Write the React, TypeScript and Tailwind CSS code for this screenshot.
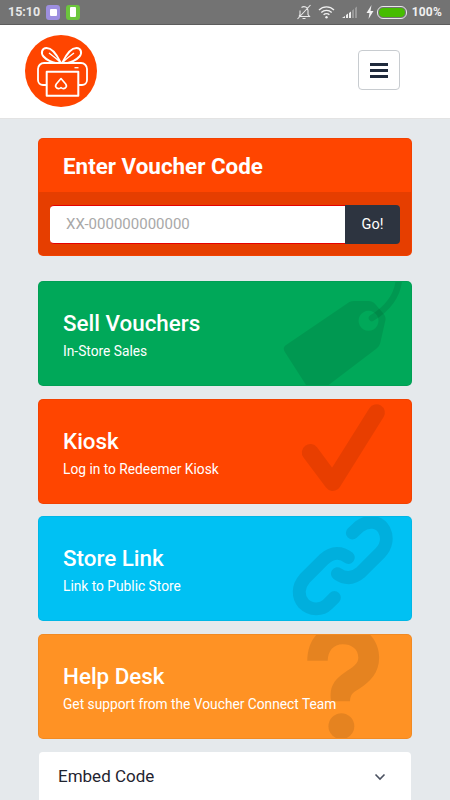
import React from "react";

function StatusIcons() {
  return (
    <div className="flex items-center">
      <svg width="16" height="16" viewBox="0 0 16 16" fill="none" stroke="#e8e8e8" strokeWidth="1.1" className="mr-[6px]">
        <path d="M3 12.5h10.5l-1.5-2V6.5a4 4 0 0 0-6.5-3M4 6.5v4l-1 2M6.5 14.5h3M1.500 15 14.500 1" />
      </svg>
      <svg width="17" height="14" viewBox="0 0 17 14" fill="none" stroke="#f0f0f0" strokeWidth="1.3" className="mr-[7px]">
        <path d="M1 5a10.500 10.500 0 0 1 15 0M3.300 7.500a7.200 7.200 0 0 1 10.400 0M5.600 9.800a4 4 0 0 1 5.800 0" />
        <circle cx="8.500" cy="12.300" r="1.200" fill="#f0f0f0" stroke="none" />
      </svg>
      <svg width="16" height="12" viewBox="0 0 16 12" className="mr-[8px]">
        <path d="M0 12l3-2v2zM4 12V9l2-1.500V12zM7 12V7l2-1.500V12z" fill="#eeeeee" />
        <path d="M10 12V4.500l2-1.500V12zM13 12V2l2-1.500V12z" fill="#9a9a9a" />
      </svg>
      <svg width="8" height="14" viewBox="0 0 8 14" className="mr-[3px]">
        <path d="M5.500 0 0.500 8h3L2.500 14l5-8h-3z" fill="#f0f0f0" />
      </svg>
      <div className="mr-[5px] flex h-[13px] w-[30px] items-center rounded-[6px] border border-[#e8e8e8] p-[1px]">
        <div className="h-full w-full rounded-[5px] bg-[#46bc00]" />
      </div>
      <span className="text-[12px] font-bold tracking-[0.2px] text-[#f0f0f0]">100%</span>
    </div>
  );
}

function Logo() {
  return (
    <svg width="72" height="72" viewBox="0 0 72 72" fill="none" stroke="white" strokeWidth="1.800" strokeLinejoin="round">
      <circle cx="36" cy="36" r="36" fill="#ff4500" stroke="none" />
      <path d="M21.700 50H18a5 5 0 0 1-5-5V34a6 6 0 0 1 6-6h37a6 6 0 0 1 6 6v11a5 5 0 0 1-5 5h-3" />
      <rect x="21.700" y="36.700" width="31.600" height="24" strokeWidth="2" />
      <path d="M35.500 27.500C32 20 27 13 21.500 13c-4.500 0-6 5-3 8.500 3 3.500 9 6 12 6.500" strokeWidth="2" />
      <path d="M35.500 27.500C32.500 24.500 26 19.500 24 18" strokeWidth="1.400" />
      <path d="M37.500 27.500C41 20 46 13 51.500 13c4.500 0 6 5 3 8.500-3 3.500-9 6-12 6.500" strokeWidth="2" />
      <path d="M37.500 27.500C40.500 24.500 47 19.500 49 18" strokeWidth="1.400" />
      <path d="M49.500 32.700h4" strokeWidth="1.300" />
      <path d="M36 43.500 31.300 49c-2.300 3.500 2 6 4.700 3.500 2.700 2.500 7 0 4.700-3.500z" strokeWidth="1.600" />
    </svg>
  );
}

function Tag() {
  return (
    <svg className="absolute inset-0 h-full w-full" viewBox="0 0 374 105" preserveAspectRatio="xMinYMin slice">
      <g opacity="0.09" fill="black">
        <path
          fillRule="evenodd"
          d="M312 20c1.500-.7 3-1 4.500-1h15c2.500 0 4.500 1 6 2.500l9 10.500c1.500 2 2.300 4 1.800 6.500l-5 22c-.6 2.500-2 5-4.500 6.800L288 106h-18L247 70c-1.500-2.500-1.300-4.500 1-6.500zM331.300 29a10 10 0 1 0 .01 0z"
        />
      </g>
      <path d="M334.700 36.300C350 27 361 14 362 -4" fill="none" stroke="black" strokeOpacity="0.09" strokeWidth="6.500" strokeLinecap="round" />
    </svg>
  );
}

function Check() {
  return (
    <svg className="absolute inset-0 h-full w-full" viewBox="0 0 374 105" preserveAspectRatio="xMinYMin slice">
      <path d="M272.700 52.700 295.300 83 339.300 12.700" fill="none" stroke="black" strokeOpacity="0.09" strokeWidth="17" strokeLinecap="round" strokeLinejoin="round" />
    </svg>
  );
}

function LinkIcon() {
  return (
    <svg className="absolute inset-0 h-full w-full" viewBox="0 0 374 105" preserveAspectRatio="xMinYMin slice">
      <g fill="none" stroke="black" strokeOpacity="0.09" strokeWidth="13" strokeLinecap="round" strokeLinejoin="round">
        <path d="M315 16 322 9.500C331 3 342 4 347 13c4 8 2 17-4 23L323 56c-8 7-16 6-23 1" />
        <path d="M311 40.700c-7-5.700-16-5.700-24 1.300L267 62c-7 8-7 18-1 25 7 7 18 7 24 1l7-7" />
      </g>
    </svg>
  );
}

function Question() {
  return (
    <svg className="absolute inset-0 h-full w-full" viewBox="0 0 374 105" preserveAspectRatio="xMinYMin slice">
      <g fill="black" fillOpacity="0.1">
        <path d="M269.700 26C270 2 285-11 306-11c21 0 36 15 36 33.700C342 38 333 47 322 54c-7 4-9 6-9.300 12.700h-19C291 52 298 44 307 38c9-6 14-9 14-15.300 0-8.700-7-13.400-15.500-13.400-9.500 0-15 6.700-15.200 16.700z" />
        <circle cx="304" cy="91.700" r="13" />
      </g>
    </svg>
  );
}

function ActionCard({ title, sub, bg, icon }: { title: string; sub: string; bg: string; icon: React.ReactNode }) {
  return (
    <div className={`relative h-[105px] overflow-hidden rounded-[5px] border border-black/5 pl-[24px] pt-[26px] text-white ${bg}`}>
      {icon}
      <div className="relative text-[22.400px] font-medium leading-[30px]">{title}</div>
      <div className="relative mt-[3px] text-[13.750px] leading-[20px]">{sub}</div>
    </div>
  );
}

export default function App() {
  return (
    <div className="flex h-[800px] w-[450px] flex-col overflow-hidden bg-[#e5e9ec] font-['Roboto',sans-serif]">
      <div className="flex h-[25px] shrink-0 items-center justify-between border-b border-[#5c5c5c] bg-[#737373] pl-[8px] pr-[8px]">
        <div className="flex items-center">
          <span className="mr-[6px] text-[12.500px] font-bold text-[#e8e8e8]">15:10</span>
          <div className="mr-[6px] flex h-[15px] w-[14px] items-center justify-center rounded-[3px] bg-[#9d8fe0]">
            <div className="h-[7px] w-[7px] rounded-[1px] bg-white" />
          </div>
          <div className="flex h-[15px] w-[14px] items-center justify-center rounded-[3px] bg-[#6cc63c]">
            <div className="h-[10px] w-[6px] rounded-[1px] bg-white" />
          </div>
        </div>
        <StatusIcons />
      </div>
      <div className="flex h-[94px] shrink-0 items-start justify-between border-b border-[#e3e3e3] bg-white pl-[25px] pr-[50px] pt-[10px]">
        <Logo />
        <button className="mt-[15px] flex h-[40px] w-[42px] flex-col items-center justify-center gap-[3px] rounded-[4px] border border-[#c8ccd0] bg-white">
          <span className="h-[3px] w-[18px] bg-[#1f2a3c]" />
          <span className="h-[3px] w-[18px] bg-[#1f2a3c]" />
          <span className="h-[3px] w-[18px] bg-[#1f2a3c]" />
        </button>
      </div>
      <div className="flex flex-col px-[38px] pt-[19px]">
        <div className="overflow-hidden rounded-[5px] border border-black/5 bg-[#ff4500]">
          <div className="flex h-[53px] items-center pl-[24px] pt-[3px] text-[22.400px] font-bold text-white">Enter Voucher Code</div>
          <div className="flex h-[63px] items-start bg-[#e63e00] px-[11px] pt-[13px]">
            <div className="flex h-[39px] flex-1 items-center rounded-l-[4px] border-y border-[#e60000] bg-white pl-[16px] text-[15px] text-[#a8a8a8]">
              XX-000000000000
            </div>
            <div className="flex h-[39px] w-[55px] items-center justify-center rounded-r-[4px] bg-[#2d3440] text-[14.500px] text-white">Go!</div>
          </div>
        </div>
        <div className="mt-[25px] flex flex-col gap-[12.500px]">
          <ActionCard title="Sell Vouchers" sub="In-Store Sales" bg="bg-[#00a859]" icon={<Tag />} />
          <ActionCard title="Kiosk" sub="Log in to Redeemer Kiosk" bg="bg-[#ff4500]" icon={<Check />} />
          <ActionCard title="Store Link" sub="Link to Public Store" bg="bg-[#00c1f3]" icon={<LinkIcon />} />
          <ActionCard title="Help Desk" sub="Get support from the Voucher Connect Team" bg="bg-[#ff9224]" icon={<Question />} />
          <div className="mx-[1px] mt-[1px] flex h-[60px] items-start justify-between rounded-t-[4px] bg-white pl-[19px] pr-[25px] pt-[12px]">
            <span className="text-[17px] leading-[24px] text-[#1f2430]">Embed Code</span>
            <svg width="12" height="8" viewBox="0 0 12 8" fill="none" stroke="#4a5160" strokeWidth="1.600" className="mt-[9px]">
              <path d="M1.500 1.500 6 6l4.500-4.500" />
            </svg>
          </div>
        </div>
      </div>
    </div>
  );
}
